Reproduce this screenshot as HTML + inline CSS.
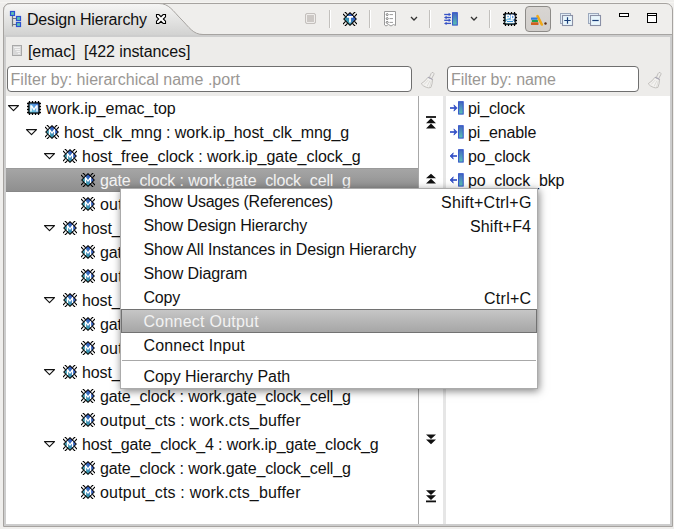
<!DOCTYPE html>
<html><head><meta charset="utf-8">
<style>
*{margin:0;padding:0;box-sizing:border-box}
html,body{width:674px;height:529px;overflow:hidden;background:#efeeec;font-family:"Liberation Sans",sans-serif;font-size:16px;color:#111;letter-spacing:-0.08px}
.a{position:absolute}
.t{position:absolute;white-space:pre;line-height:24px;height:24px;margin-top:1px}
.m{letter-spacing:-0.23px}
.p{letter-spacing:-0.13px}
svg.i{position:absolute;overflow:visible}
</style></head><body>
<svg width="0" height="0" style="position:absolute">
<defs>
<linearGradient id="gb" x1="0.9" y1="0.1" x2="0.2" y2="0.8"><stop offset="0" stop-color="#2a46c4"/><stop offset="0.3" stop-color="#345cc0"/><stop offset="1" stop-color="#3eaeaa"/></linearGradient>
<linearGradient id="gbar" x1="0" y1="0" x2="0" y2="1"><stop offset="0" stop-color="#4566c0"/><stop offset="1" stop-color="#5cc4b4"/></linearGradient>
<linearGradient id="gsq" x1="1" y1="0" x2="0" y2="1"><stop offset="0" stop-color="#3568d8"/><stop offset=".6" stop-color="#6cb8e0"/><stop offset="1" stop-color="#58c8d8"/></linearGradient>
<symbol id="dia" viewBox="0 0 14 14"><path d="M2.4 0.4L4.3 2.3M0.4 2.4L2.3 4.3M11.6 0.4L9.7 2.3M13.6 2.4L11.7 4.3M2.4 13.6L4.3 11.7M0.4 11.6L2.3 9.7M11.6 13.6L9.7 11.7M13.6 11.6L11.7 9.7" stroke="#000" stroke-width="1.15" stroke-linecap="round"/><g fill="#000"><circle cx="2.4" cy="0.4" r="0.7"/><circle cx="0.4" cy="2.4" r="0.7"/><circle cx="11.6" cy="0.4" r="0.7"/><circle cx="13.6" cy="2.4" r="0.7"/><circle cx="2.4" cy="13.6" r="0.7"/><circle cx="0.4" cy="11.6" r="0.7"/><circle cx="11.6" cy="13.6" r="0.7"/><circle cx="13.6" cy="11.6" r="0.7"/></g><path d="M7 0.7L13.3 7L7 13.3L0.7 7Z" fill="url(#gb)" stroke="#000" stroke-width="1.05" stroke-linejoin="round"/></symbol>
<symbol id="dm" viewBox="0 0 14 14"><path d="M2.4 0.4L4.3 2.3M0.4 2.4L2.3 4.3M11.6 0.4L9.7 2.3M13.6 2.4L11.7 4.3M2.4 13.6L4.3 11.7M0.4 11.6L2.3 9.7M11.6 13.6L9.7 11.7M13.6 11.6L11.7 9.7" stroke="#000" stroke-width="1.15" stroke-linecap="round"/><g fill="#000"><circle cx="2.4" cy="0.4" r="0.7"/><circle cx="0.4" cy="2.4" r="0.7"/><circle cx="11.6" cy="0.4" r="0.7"/><circle cx="13.6" cy="2.4" r="0.7"/><circle cx="2.4" cy="13.6" r="0.7"/><circle cx="0.4" cy="11.6" r="0.7"/><circle cx="11.6" cy="13.6" r="0.7"/><circle cx="13.6" cy="11.6" r="0.7"/></g><path d="M7 0.7L13.3 7L7 13.3L0.7 7Z" fill="url(#gb)" stroke="#000" stroke-width="1.05" stroke-linejoin="round"/><path d="M4.5 10.1V4.6L7 8.1L9.5 4.6V10.1" fill="none" stroke="#fff" stroke-width="1.3" stroke-linejoin="round"/></symbol>
<symbol id="dt" viewBox="0 0 14 14"><path d="M2.4 0.4L4.3 2.3M0.4 2.4L2.3 4.3M11.6 0.4L9.7 2.3M13.6 2.4L11.7 4.3M2.4 13.6L4.3 11.7M0.4 11.6L2.3 9.7M11.6 13.6L9.7 11.7M13.6 11.6L11.7 9.7" stroke="#000" stroke-width="1.15" stroke-linecap="round"/><g fill="#000"><circle cx="2.4" cy="0.4" r="0.7"/><circle cx="0.4" cy="2.4" r="0.7"/><circle cx="11.6" cy="0.4" r="0.7"/><circle cx="13.6" cy="2.4" r="0.7"/><circle cx="2.4" cy="13.6" r="0.7"/><circle cx="0.4" cy="11.6" r="0.7"/><circle cx="11.6" cy="13.6" r="0.7"/><circle cx="13.6" cy="11.6" r="0.7"/></g><path d="M7 0.7L13.3 7L7 13.3L0.7 7Z" fill="url(#gb)" stroke="#000" stroke-width="1.05" stroke-linejoin="round"/><path d="M4 4.1H10V5.7H7.9V10.6H6.1V5.7H4Z" fill="#fff"/></symbol>
<symbol id="sq" viewBox="0 0 14 14"><path d="M2.5 0.2V1.5M5.5 0.2V1.5M8.5 0.2V1.5M11.5 0.2V1.5M2.5 12.5V13.8M5.5 12.5V13.8M8.5 12.5V13.8M11.5 12.5V13.8M0.2 2.5H1.5M0.2 5.5H1.5M0.2 8.5H1.5M0.2 11.5H1.5M12.5 2.5H13.8M12.5 5.5H13.8M12.5 8.5H13.8M12.5 11.5H13.8" stroke="#000" stroke-width="1.3" stroke-linecap="round"/><rect x="1.9" y="1.9" width="10.2" height="10.2" fill="url(#gsq)" stroke="#000" stroke-width="1.3"/><path d="M3.3 10.4V4.2H4.9L7 7.4L9.1 4.2H10.7V10.4H9.3V6.6L7 9.7L4.7 6.6V10.4Z" fill="#fff"/></symbol>
<symbol id="pd" viewBox="0 0 14 14"><rect x="0" y="0" width="14" height="14" fill="#fff" opacity=".6"/><path d="M2.5 0.2V1.5M5.5 0.2V1.5M8.5 0.2V1.5M11.5 0.2V1.5M2.5 12.5V13.8M5.5 12.5V13.8M8.5 12.5V13.8M11.5 12.5V13.8M0.2 2.5H1.5M0.2 5.5H1.5M0.2 8.5H1.5M0.2 11.5H1.5M12.5 2.5H13.8M12.5 5.5H13.8M12.5 8.5H13.8M12.5 11.5H13.8" stroke="#000" stroke-width="1.3" stroke-linecap="round"/><rect x="1.9" y="1.9" width="10.2" height="10.2" fill="url(#gsq)" stroke="#000" stroke-width="1.3"/>
<path d="M3.6 7.2V3.1H5.3A1.35 1.35 0 0 1 5.3 5.8H3.6M8.4 7V3.1H9.2A1.95 1.95 0 0 1 9.2 7Z" fill="none" stroke="#fff" stroke-width="1.3"/><path d="M4.2 8.4H9.8L11.3 10.6H2.7Z" fill="#3a8ed0" stroke="#fff" stroke-width="1"/></symbol>
<symbol id="pin" viewBox="0 0 16 16"><path d="M1 8H6.5" stroke="#3652c6" stroke-width="1.7"/><path d="M4.9 4.9L8.2 8L4.9 11.1L5.9 8Z" fill="#3652c6" stroke="#3652c6" stroke-width="0.8" stroke-linejoin="round"/><rect x="9.6" y="1.7" width="4.6" height="12.4" fill="url(#gbar)" stroke="#3050c8" stroke-width="1"/></symbol>
<symbol id="pout" viewBox="0 0 16 16"><path d="M2.5 8H8" stroke="#3652c6" stroke-width="1.7"/><path d="M4.3 4.9L1 8L4.3 11.1L3.3 8Z" fill="#3652c6" stroke="#3652c6" stroke-width="0.8" stroke-linejoin="round"/><rect x="9.6" y="1.7" width="4.6" height="12.4" fill="url(#gbar)" stroke="#3050c8" stroke-width="1"/></symbol>
<symbol id="tri" viewBox="0 0 12 7" overflow="visible"><path d="M0.5 0.6H10.5L5.5 5.6Z" fill="#fff" stroke="#111" stroke-width="1.15" stroke-linejoin="round"/></symbol>
<symbol id="broom" viewBox="0 0 16 18"><path d="M10.3 6.6L12.2 2.4Q12.9 1 14.2 1.6Q15.4 2.3 14.8 3.6L12.6 7.7Z" fill="#efeeec" stroke="#b9b7b4" stroke-width="0.9"/><path d="M9 6.2L13.6 8.4Q13.3 13.3 11.9 16.4Q9.8 17.3 7.4 16.4Q3.8 15 2.2 12.7Q6.3 10.3 9 6.2Z" fill="#f3f2f0" stroke="#bdbbb8" stroke-width="0.9"/><path d="M9 6.2L13.6 8.4" stroke="#a9a7b6" stroke-width="1.1"/><path d="M5 13.6L9.3 9M8 15.4L11 9.6M10.6 16L12.4 9.6" stroke="#d6d4d0" stroke-width="0.7"/></symbol>
</defs>
</svg>

<!-- outer panel -->
<div class="a" style="left:0;top:2px;width:674px;height:1px;background:#f5f4f1"></div>
<div class="a" style="left:3px;top:3px;width:670px;height:524px;border:1px solid #a6a3a0;border-radius:7px 7px 0 0;background:#efeeec"></div>
<!-- tab bar bottom lines -->
<div class="a" style="left:190px;top:34px;width:482px;height:1px;background:#a6a4a2"></div>
<!-- selected tab with curve -->
<svg class="i" style="left:3px;top:3px" width="210" height="33" viewBox="0 0 210 33">
<defs><linearGradient id="tabg" x1="0" y1="0" x2="0" y2="1"><stop offset="0" stop-color="#f6f6f5"/><stop offset="1" stop-color="#d2d2d1"/></linearGradient></defs>
<path d="M0.5 32V8Q0.5 0.5 8 0.5H156C166 0.5 170 8 178 16C186 24 190 31.5 200 31.5H210V32Z" fill="url(#tabg)"/>
<path d="M0.5 32V8Q0.5 0.5 8 0.5H156C166 0.5 170 8 178 16C186 24 190 31.5 200 31.5H210" fill="none" stroke="#a6a3a0" stroke-width="1"/>
</svg>
<!-- body frame -->
<div class="a" style="left:4px;top:35px;width:668px;height:491px;background:#cdcdcd"></div>
<div class="a" style="left:6px;top:37px;width:664px;height:487px;background:#edecea"></div>

<!-- tab title -->
<svg class="i" style="left:9px;top:10px" width="14" height="18" viewBox="0 0 14 18">
<path d="M3.5 5V16.5M3.5 8.5H8M3.5 14.5H8" stroke="#6e7680" stroke-width="1.2" fill="none"/>
<rect x="1.5" y="1.5" width="4" height="4" fill="#5ec4b4" stroke="#2c50d0" stroke-width="1.2"/>
<rect x="7.5" y="6.5" width="4" height="4" fill="#5ec4b4" stroke="#2c50d0" stroke-width="1.2"/>
<rect x="7.5" y="12.5" width="4" height="4" fill="#5ec4b4" stroke="#2c50d0" stroke-width="1.2"/>
</svg>
<div class="t" style="left:27px;top:7px;letter-spacing:-0.18px">Design Hierarchy</div>
<svg class="i" style="left:155px;top:13px" width="12" height="12" viewBox="0 0 12 12"><path d="M1.5 1.5L3.8 1.5L6 3.7L8.2 1.5L10.5 1.5L10.5 3.8L8.3 6L10.5 8.2L10.5 10.5L8.2 10.5L6 8.3L3.8 10.5L1.5 10.5L1.5 8.2L3.7 6L1.5 3.8Z" fill="#fff" stroke="#000" stroke-width="1.1" stroke-linejoin="miter"/></svg>


<!-- toolbar -->
<div class="a" style="left:305px;top:13px;width:11px;height:11px;border:1px solid #c4c0bd;border-radius:2px;background:#ccc8c5;box-shadow:inset 0 0 0 1px #efedeb"></div>
<div class="a" style="left:329px;top:10px;width:2px;height:18px;background:linear-gradient(90deg,#c2c0bd 50%,#fff 50%)"></div>
<svg class="i" style="left:343px;top:12px" width="14" height="14"><use href="#dt"/></svg>
<div class="a" style="left:369px;top:10px;width:2px;height:18px;background:linear-gradient(90deg,#c2c0bd 50%,#fff 50%)"></div>
<svg class="i" style="left:383px;top:11px" width="14" height="16" viewBox="0 0 14 16">
<path d="M1.5 0.5H12.5V14.5L10.5 13.5L8 15L5.5 13.5L3 15L1.5 14Z" fill="#fff" stroke="#9a9a9a" stroke-width="1"/>
<g fill="none" stroke="#707070" stroke-width="0.9"><circle cx="4.2" cy="3.6" r="1"/><circle cx="4.2" cy="7.6" r="1"/><circle cx="4.2" cy="11.4" r="1"/></g>
<path d="M6.5 3.6H10M6.5 7.6H10M6.5 11.4H10" stroke="#909090" stroke-width="0.9"/>
</svg>
<svg class="i" style="left:410px;top:16px" width="8" height="5" viewBox="0 0 8 5"><path d="M1 1L4 4L7 1" fill="none" stroke="#333" stroke-width="1.3"/></svg>
<div class="a" style="left:429px;top:10px;width:2px;height:18px;background:linear-gradient(90deg,#c2c0bd 50%,#fff 50%)"></div>
<svg class="i" style="left:443px;top:11px" width="16" height="16" viewBox="0 0 16 16"><path d="M1.2 3.5H6.5" stroke="#3652c6" stroke-width="1.3"/><path d="M5.6 1.8L8.2 3.5L5.6 5.2Z" fill="#3652c6"/><path d="M2.8 6.5H8" stroke="#3652c6" stroke-width="1.3"/><path d="M3.6 4.8L1 6.5L3.6 8.2Z" fill="#3652c6"/><path d="M1.2 9.3H6.5" stroke="#3652c6" stroke-width="1.3"/><path d="M5.6 7.6000000000000005L8.2 9.3L5.6 11.0Z" fill="#3652c6"/><path d="M2.8 12.4H8" stroke="#3652c6" stroke-width="1.3"/><path d="M3.6 10.700000000000001L1 12.4L3.6 14.1Z" fill="#3652c6"/><rect x="9.6" y="1.7" width="4.7" height="12.4" fill="url(#gbar)" stroke="#3050c8" stroke-width="1"/></svg>
<svg class="i" style="left:470px;top:16px" width="8" height="5" viewBox="0 0 8 5"><path d="M1 1L4 4L7 1" fill="none" stroke="#333" stroke-width="1.3"/></svg>
<div class="a" style="left:489px;top:10px;width:2px;height:18px;background:linear-gradient(90deg,#c2c0bd 50%,#fff 50%)"></div>
<svg class="i" style="left:503px;top:12px" width="14" height="14"><use href="#pd"/></svg>
<div class="a" style="left:525px;top:6px;width:26px;height:26px;border:1px solid #8d8b88;border-radius:4px;background:linear-gradient(#d8d5d2,#d2cfcc)"></div>
<svg class="i" style="left:530px;top:15px" width="18" height="11" viewBox="0 0 18 11">
<path d="M7.5 1.2L11.8 9.5" stroke="#f0a818" stroke-width="2.6" stroke-linecap="round"/>
<rect x="1" y="2.5" width="6.5" height="2.2" rx="0.5" fill="#2c7ce0"/>
<rect x="1.8" y="4.9" width="6.2" height="2.2" rx="0.5" fill="#20a050"/>
<rect x="1" y="7.3" width="7.5" height="2.6" rx="0.5" fill="#d06020"/>
<circle cx="15.5" cy="8.5" r="1.2" fill="#5a2a10"/>
</svg>
<svg class="i" style="left:559px;top:12px" width="16" height="16" viewBox="0 0 16 16">
<rect x="1.5" y="1.5" width="10" height="10" fill="#e4f0f8" stroke="#9ca8bc" stroke-width="1"/>
<rect x="3.5" y="3.5" width="10" height="10" fill="#e8f6fc" stroke="#8a90a6" stroke-width="1.1"/>
<path d="M5.3 8.5H11.7M8.5 5.3V11.7" stroke="#1a3e78" stroke-width="1.2"/>
</svg>
<svg class="i" style="left:587px;top:12px" width="16" height="16" viewBox="0 0 16 16">
<rect x="1.5" y="1.5" width="10" height="10" fill="#e4f0f8" stroke="#9ca8bc" stroke-width="1"/>
<rect x="3.5" y="3.5" width="10" height="10" fill="#e8f6fc" stroke="#8a90a6" stroke-width="1.1"/>
<path d="M5.3 8.5H11.7" stroke="#1a3e78" stroke-width="1.2"/>
</svg>
<div class="a" style="left:619px;top:13px;width:10px;height:4px;border:1px solid #000;background:#fff"></div>
<div class="a" style="left:647px;top:13px;width:10px;height:10px;border:1px solid #000;background:#fff;box-shadow:inset 0 1px 0 #fff,inset 0 2px 0 #000"></div>

<!-- info line -->
<svg class="i" style="left:12px;top:45px" width="10" height="11" viewBox="0 0 10 11">
<rect x="0.5" y="0.5" width="9" height="10" fill="#d8d8d8" stroke="#a8a8a8" stroke-width="1"/>
<path d="M2 2.5H8M3 4.5H8M4.5 6.5H8M6 8.5H8" stroke="#f4f4f4" stroke-width="0.9"/>
</svg>
<div class="t" style="left:28px;top:39px;letter-spacing:-0.1px">[emac]  [422 instances]</div>

<!-- filters -->
<div class="a" style="left:7px;top:66px;width:405px;height:26px;border:1px solid #6f6f6f;border-radius:4px;background:#fff"></div>
<div class="t" style="left:10.5px;top:67px;color:#9a9794;letter-spacing:0.03px">Filter by: hierarchical name .port</div>
<svg class="i" style="left:419px;top:71px" width="16" height="18"><use href="#broom"/></svg>
<div class="a" style="left:447px;top:66px;width:192px;height:26px;border:1px solid #6f6f6f;border-radius:4px;background:#fff"></div>
<div class="t" style="left:451px;top:67px;color:#9a9794;letter-spacing:-0.06px">Filter by: name</div>
<svg class="i" style="left:646px;top:71px" width="16" height="18"><use href="#broom"/></svg>

<!-- tree area -->
<div class="a" style="left:6px;top:96px;width:664px;height:428px;background:#fff"></div>
<div class="a" style="left:418px;top:96px;width:1px;height:428px;background:#a8a8a8"></div>
<div class="a" style="left:443px;top:96px;width:3px;height:428px;background:#e6e6e6"></div>
<!-- tree rows -->
<div class="a" style="left:6px;top:168px;width:412px;height:24px;background:linear-gradient(#9a9a9a 0,#9a9a9a 1px,#a5a5a5 1px,#8f8f8f 23px,#878787 23px)"></div>
<svg class="i" style="left:8px;top:105px" width="12" height="7"><use href="#tri"/></svg>
<svg class="i" style="left:27px;top:101px" width="14" height="14"><use href="#sq"/></svg>
<div class="t" style="left:46px;top:96px;letter-spacing:-0.01px">work.ip_emac_top</div>
<svg class="i" style="left:26px;top:129px" width="12" height="7"><use href="#tri"/></svg>
<svg class="i" style="left:45px;top:125px" width="14" height="14"><use href="#dm"/></svg>
<div class="t" style="left:64px;top:120px;letter-spacing:-0.08px">host_clk_mng : work.ip_host_clk_mng_g</div>
<svg class="i" style="left:44px;top:153px" width="12" height="7"><use href="#tri"/></svg>
<svg class="i" style="left:63px;top:149px" width="14" height="14"><use href="#dm"/></svg>
<div class="t" style="left:82px;top:144px;letter-spacing:-0.02px">host_free_clock : work.ip_gate_clock_g</div>
<svg class="i" style="left:81px;top:173px" width="14" height="14"><use href="#dm"/></svg>
<div class="t" style="left:100px;top:168px;color:#f4f4f4;letter-spacing:-0.127px">gate_clock : work.gate_clock_cell_g</div>
<svg class="i" style="left:81px;top:197px" width="14" height="14"><use href="#dm"/></svg>
<div class="t" style="left:100px;top:192px;letter-spacing:0.19px">output_cts : work.cts_buffer</div>
<svg class="i" style="left:44px;top:225px" width="12" height="7"><use href="#tri"/></svg>
<svg class="i" style="left:63px;top:221px" width="14" height="14"><use href="#dm"/></svg>
<div class="t" style="left:82px;top:216px;letter-spacing:-0.1px">host_gate_clock_1 : work.ip_gate_clock_g</div>
<svg class="i" style="left:81px;top:245px" width="14" height="14"><use href="#dm"/></svg>
<div class="t" style="left:100px;top:240px;letter-spacing:-0.127px">gate_clock : work.gate_clock_cell_g</div>
<svg class="i" style="left:81px;top:269px" width="14" height="14"><use href="#dm"/></svg>
<div class="t" style="left:100px;top:264px;letter-spacing:0.19px">output_cts : work.cts_buffer</div>
<svg class="i" style="left:44px;top:297px" width="12" height="7"><use href="#tri"/></svg>
<svg class="i" style="left:63px;top:293px" width="14" height="14"><use href="#dm"/></svg>
<div class="t" style="left:82px;top:288px;letter-spacing:-0.1px">host_gate_clock_2 : work.ip_gate_clock_g</div>
<svg class="i" style="left:81px;top:317px" width="14" height="14"><use href="#dm"/></svg>
<div class="t" style="left:100px;top:312px;letter-spacing:-0.127px">gate_clock : work.gate_clock_cell_g</div>
<svg class="i" style="left:81px;top:341px" width="14" height="14"><use href="#dm"/></svg>
<div class="t" style="left:100px;top:336px;letter-spacing:0.19px">output_cts : work.cts_buffer</div>
<svg class="i" style="left:44px;top:369px" width="12" height="7"><use href="#tri"/></svg>
<svg class="i" style="left:63px;top:365px" width="14" height="14"><use href="#dm"/></svg>
<div class="t" style="left:82px;top:360px;letter-spacing:-0.1px">host_gate_clock_3 : work.ip_gate_clock_g</div>
<svg class="i" style="left:81px;top:389px" width="14" height="14"><use href="#dm"/></svg>
<div class="t" style="left:100px;top:384px;letter-spacing:-0.127px">gate_clock : work.gate_clock_cell_g</div>
<svg class="i" style="left:81px;top:413px" width="14" height="14"><use href="#dm"/></svg>
<div class="t" style="left:100px;top:408px;letter-spacing:0.19px">output_cts : work.cts_buffer</div>
<svg class="i" style="left:44px;top:441px" width="12" height="7"><use href="#tri"/></svg>
<svg class="i" style="left:63px;top:437px" width="14" height="14"><use href="#dm"/></svg>
<div class="t" style="left:82px;top:432px;letter-spacing:-0.1px">host_gate_clock_4 : work.ip_gate_clock_g</div>
<svg class="i" style="left:81px;top:461px" width="14" height="14"><use href="#dm"/></svg>
<div class="t" style="left:100px;top:456px;letter-spacing:-0.127px">gate_clock : work.gate_clock_cell_g</div>
<svg class="i" style="left:81px;top:485px" width="14" height="14"><use href="#dm"/></svg>
<div class="t" style="left:100px;top:480px;letter-spacing:0.19px">output_cts : work.cts_buffer</div>
<!-- side arrows -->
<svg class="i" style="left:425px;top:116px" width="12" height="13" viewBox="0 0 12 13"><path d="M1 1H11" stroke="#111" stroke-width="1.8"/><path d="M1 7.3L6 2.3L11 7.3ZM1 12.6L6 7.6L11 12.6Z" fill="#111"/></svg>
<svg class="i" style="left:425px;top:173px" width="12" height="11" viewBox="0 0 12 11"><path d="M1 5.3L6 0.8L11 5.3ZM1 10.6L6 5.8L11 10.6Z" fill="#111"/></svg>
<svg class="i" style="left:425px;top:434px" width="12" height="11" viewBox="0 0 12 11"><path d="M1 0.4L6 5L11 0.4ZM1 5.6L6 10.2L11 5.6Z" fill="#111"/></svg>
<svg class="i" style="left:425px;top:489px" width="12" height="14" viewBox="0 0 12 14"><path d="M1 1.3L6 6.1L11 1.3ZM1 6.3L6 11.1L11 6.3Z" fill="#111"/><path d="M1 12.4H11" stroke="#111" stroke-width="1.8"/></svg>
<!-- ports -->
<svg class="i" style="left:449px;top:100px" width="16" height="16"><use href="#pin"/></svg>
<div class="t p" style="left:468px;top:96px">pi_clock</div>
<svg class="i" style="left:449px;top:124px" width="16" height="16"><use href="#pin"/></svg>
<div class="t p" style="left:468px;top:120px">pi_enable</div>
<svg class="i" style="left:449px;top:148px" width="16" height="16"><use href="#pout"/></svg>
<div class="t p" style="left:468px;top:144px">po_clock</div>
<svg class="i" style="left:449px;top:172px" width="16" height="16"><use href="#pout"/></svg>
<div class="t p" style="left:468px;top:168px">po_clock_bkp</div>
<!-- menu -->
<div class="a" style="left:120px;top:188px;width:418px;height:201px;background:#fff;border:1px solid rgba(0,0,0,.33);box-shadow:1px 2px 8px rgba(0,0,0,.5)"></div>
<div class="a" style="left:121px;top:309px;width:416px;height:24px;border:1px solid #727272;background:linear-gradient(#c6c6c6,#a6a6a6)"></div>
<div class="a" style="left:122px;top:360px;width:414px;height:1px;background:#a8a8a8"></div>
<div class="t m" style="left:143.5px;top:189px;letter-spacing:-0.26px">Show Usages (References)</div>
<div class="t m" style="left:441px;top:190px;letter-spacing:0.21px">Shift+Ctrl+G</div>
<div class="t m" style="left:143.5px;top:213px;letter-spacing:-0.17px">Show Design Hierarchy</div>
<div class="t m" style="left:470px;top:214px;letter-spacing:0.14px">Shift+F4</div>
<div class="t m" style="left:143.5px;top:237px;letter-spacing:-0.15px">Show All Instances in Design Hierarchy</div>
<div class="t m" style="left:143.5px;top:261px;letter-spacing:-0.1px">Show Diagram</div>
<div class="t m" style="left:143.5px;top:285px">Copy</div>
<div class="t m" style="left:484px;top:286px;letter-spacing:0.27px">Ctrl+C</div>
<div class="t m" style="left:143.5px;top:309px;color:#f2f2f2;letter-spacing:0.24px">Connect Output</div>
<div class="t m" style="left:143.5px;top:333px;letter-spacing:0.14px">Connect Input</div>
<div class="t m" style="left:143.5px;top:364px;letter-spacing:-0.05px">Copy Hierarchy Path</div>
</body></html>
